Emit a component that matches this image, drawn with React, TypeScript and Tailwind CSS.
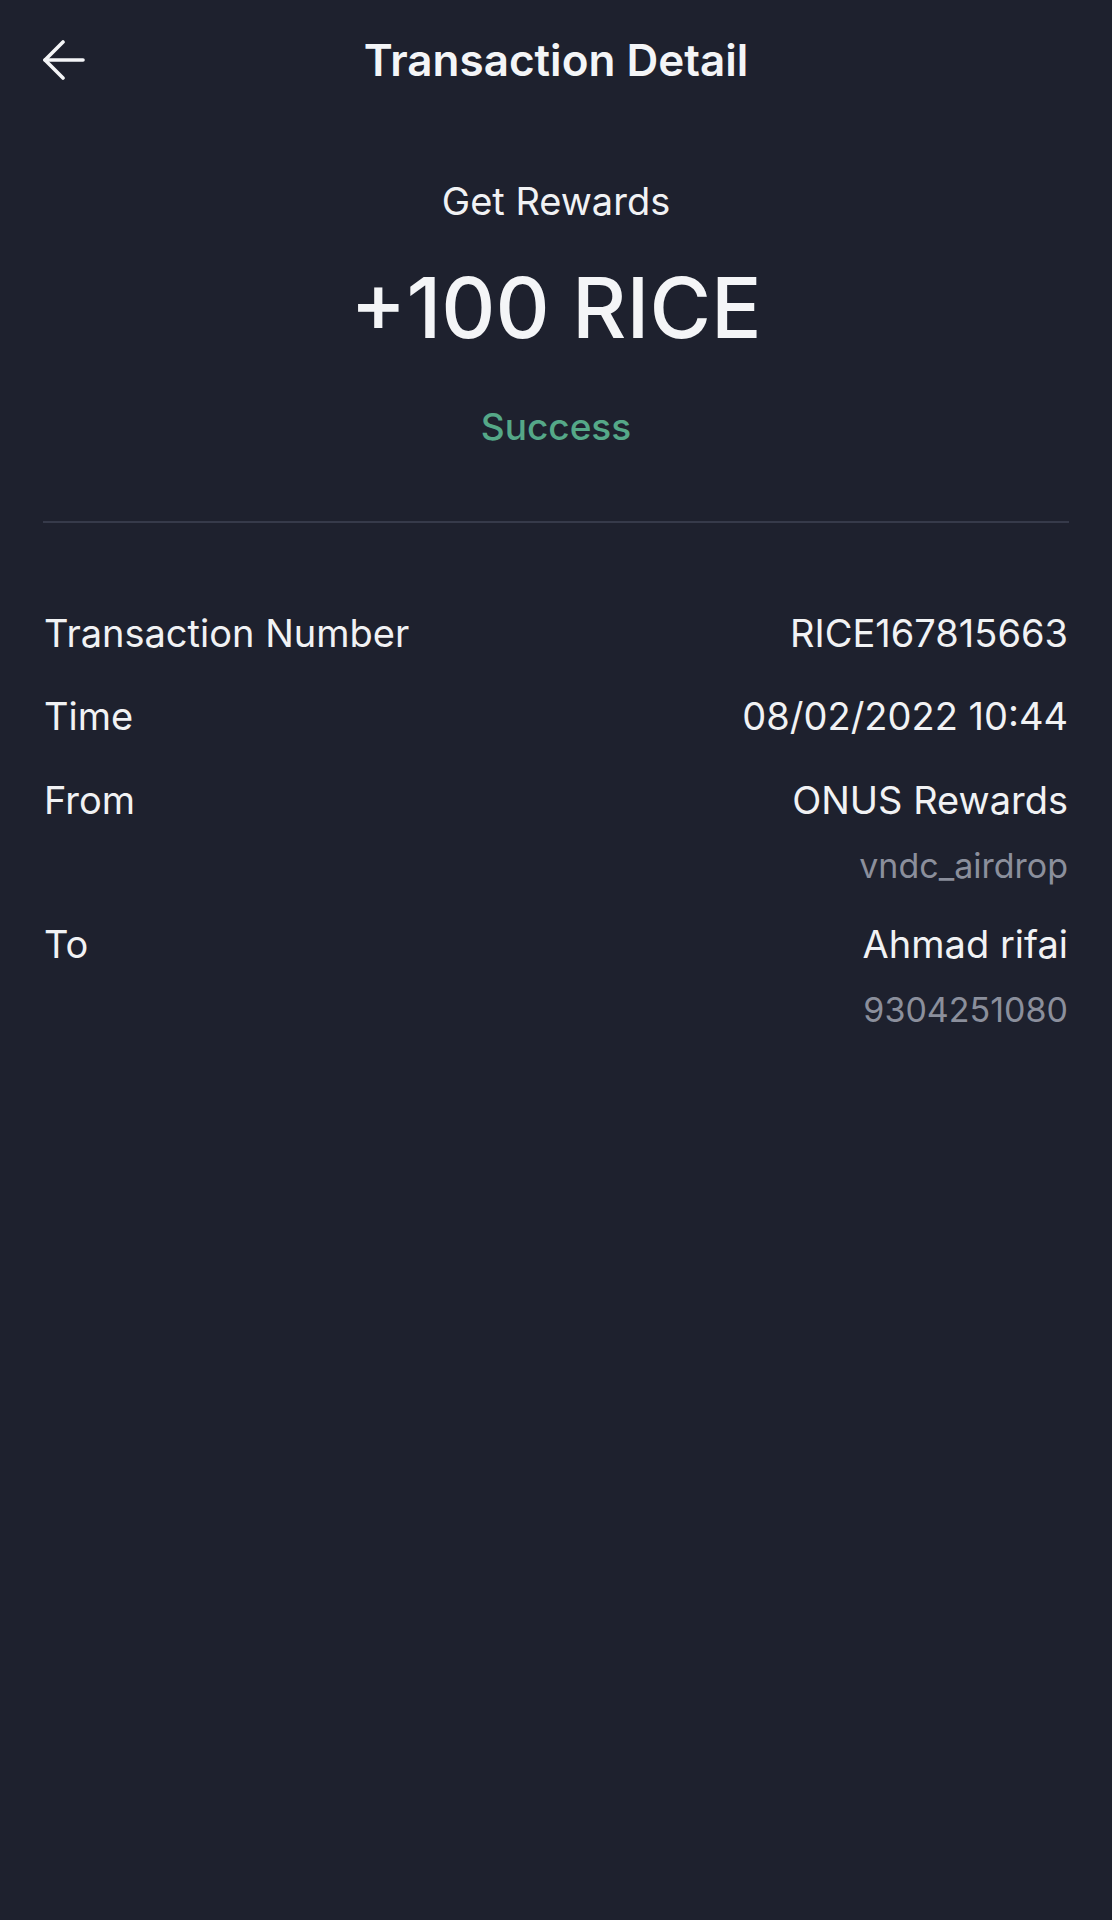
import React from "react";

function Row({ label, value, sub }: { label: string; value: string; sub?: string }) {
  return (
    <div className="flex justify-between">
      <div className="text-[38px] leading-none text-[#f1f2f4]">{label}</div>
      <div className="flex flex-col items-end">
        <div className="text-[38px] leading-none text-[#f1f2f4]">{value}</div>
        {sub && <div className="mt-[30px] text-[34px] leading-none text-[#8b8f9c]">{sub}</div>}
      </div>
    </div>
  );
}

export default function App() {
  return (
    <div
      className="w-[1112px] h-[1920px] bg-[#1e212e] flex flex-col"
      style={{ fontFamily: "Inter, 'Noto Sans', sans-serif" }}
    >
      <div className="h-[120px] grid grid-cols-[1fr_auto_1fr] items-center px-[43px]">
        <svg width="42" height="40" viewBox="0 0 42 40" fill="none" stroke="#f4f5f7" strokeWidth="3.6" strokeLinecap="round" strokeLinejoin="round">
          <path d="M20 2 L2 20 L20 38" />
          <path d="M2 20 H40" />
        </svg>
        <div className="text-[44px] leading-none font-semibold text-[#f4f5f7]">Transaction Detail</div>
        <div />
      </div>
      <div className="flex flex-col items-center">
        <div className="mt-[62px] text-[38px] leading-none text-[#f1f2f4]">Get Rewards</div>
        <div className="mt-[46px] text-[84px] leading-none font-medium text-[#f4f5f7]">+100 RICE</div>
        <div className="mt-[58px] text-[37px] leading-none font-medium text-[#55a888]">Success</div>
      </div>
      <div className="mt-[76px] mx-[43px] h-[2px] bg-[#363a4a]" />
      <div className="mx-[44px] mt-[91px] flex flex-col">
        <Row label="Transaction Number" value="RICE167815663" />
        <div className="h-[45px]" />
        <Row label="Time" value="08/02/2022 10:44" />
        <div className="h-[46px]" />
        <Row label="From" value="ONUS Rewards" sub="vndc_airdrop" />
        <div className="h-[42px]" />
        <Row label="To" value="Ahmad rifai" sub="9304251080" />
      </div>
    </div>
  );
}
